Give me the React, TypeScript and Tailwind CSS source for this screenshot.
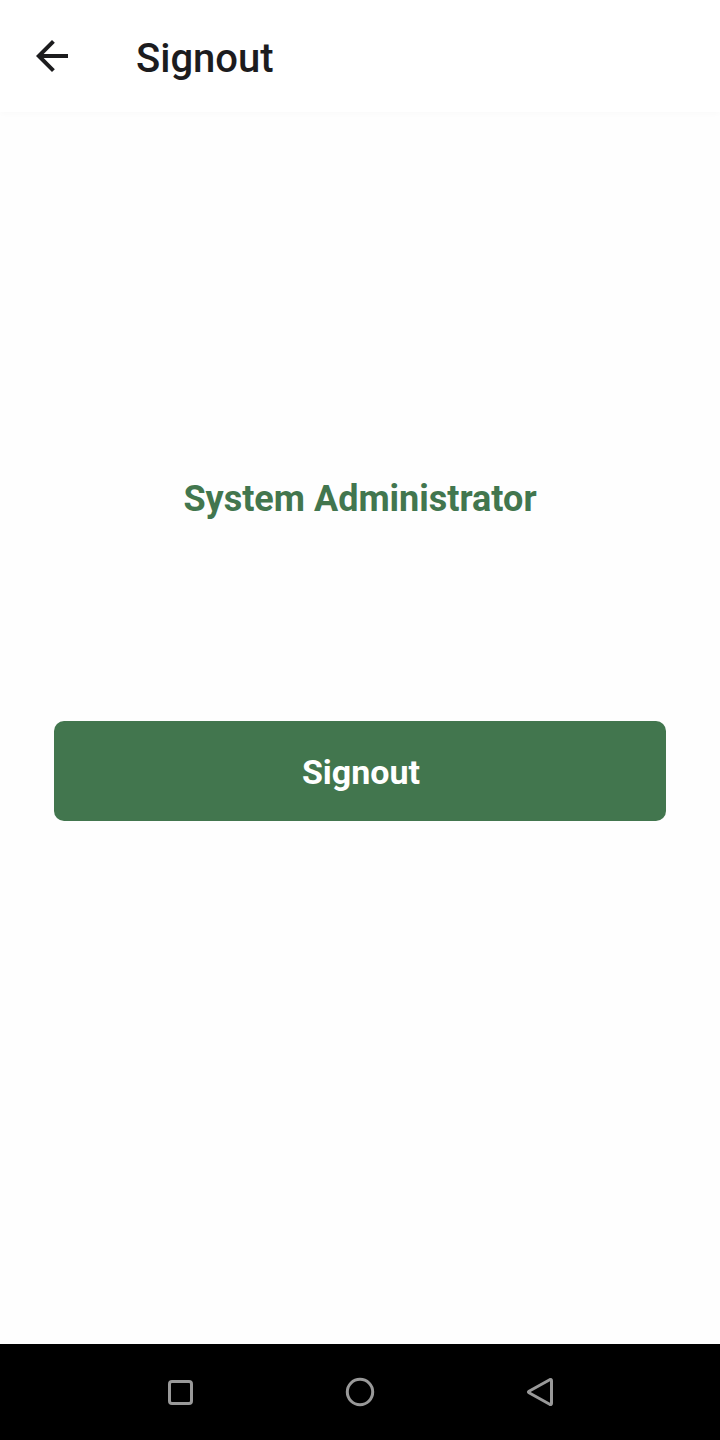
export default function App() {
  return (
    <div className="flex min-h-screen flex-col bg-[#fefefe] font-[Roboto,sans-serif]">
      <header className="flex h-28 items-center gap-14 bg-white px-6 shadow-[0_2px_6px_rgba(0,0,0,0.02)]">
        <button type="button" aria-label="Back" className="flex size-14 items-center justify-center">
          <svg viewBox="0 0 24 24" className="size-12 text-[#1c1c1e]" fill="currentColor" aria-hidden="true">
            <path d="M20 11H7.83l5.59-5.59L12 4l-8 8 8 8 1.41-1.41L7.83 13H20v-2z" />
          </svg>
        </button>
        <h1 className="pt-1.5 text-[40px] leading-12 font-medium text-[#1c1c1e]">Signout</h1>
      </header>
      <main className="flex flex-1 flex-col px-[54px] pt-[363px]">
        <p className="text-center text-4xl leading-12 font-bold text-[#42764e]">System Administrator</p>
        <button type="button" className="mt-[198px] h-[100px] w-full rounded-[10px] bg-[#42764e] pt-0.5 pl-0.5 text-[34px] leading-10 font-bold text-white">
          Signout
        </button>
      </main>
      <nav aria-label="System" className="flex h-24 items-center justify-center gap-[132px] bg-black text-[#999999]">
        <button type="button" aria-label="Recent apps" className="size-12">
          <svg viewBox="0 0 48 48" fill="none" stroke="currentColor" strokeWidth="3" aria-hidden="true">
            <rect x="13.5" y="13.5" width="22" height="22" rx="2.5" />
          </svg>
        </button>
        <button type="button" aria-label="Home" className="size-12">
          <svg viewBox="0 0 48 48" fill="none" stroke="currentColor" strokeWidth="3" aria-hidden="true">
            <circle cx="24" cy="24" r="12.7" />
          </svg>
        </button>
        <button type="button" aria-label="Go back" className="size-12">
          <svg viewBox="0 0 48 48" fill="none" stroke="currentColor" strokeWidth="3" strokeLinejoin="round" aria-hidden="true">
            <path d="M13 23.2 33.7 11.7Q35.5 10.8 35.5 12.8V35.2Q35.5 37.2 33.7 36.3L13 24.8Q11.8 24 13 23.2z" />
          </svg>
        </button>
      </nav>
    </div>
  );
}
